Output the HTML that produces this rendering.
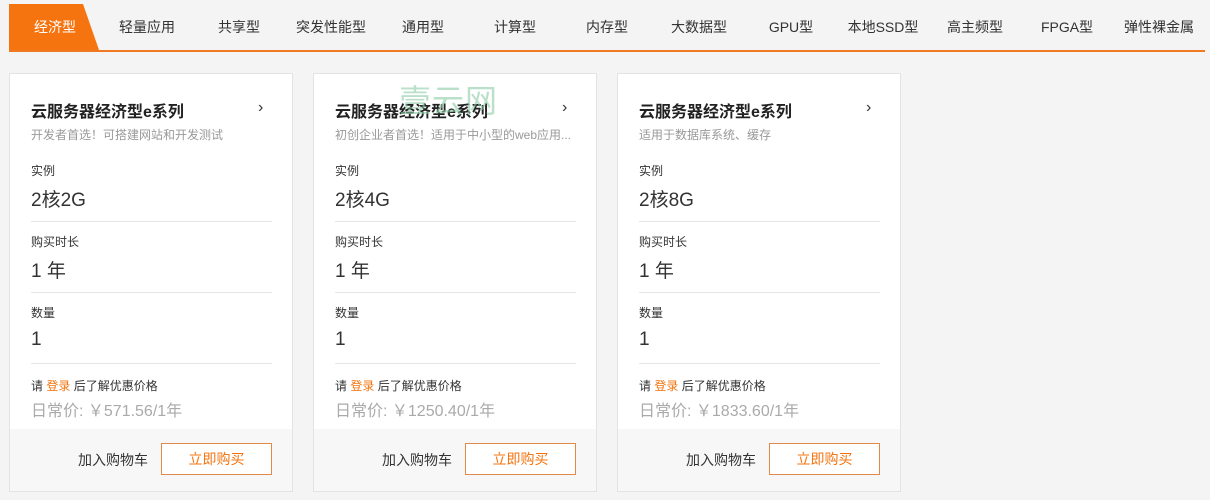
<!DOCTYPE html>
<html><head><meta charset="utf-8"><style>
*{margin:0;padding:0;box-sizing:border-box}
body{width:1210px;height:500px;background:#f4f4f4;font-family:"Liberation Sans","Noto Sans CJK SC",sans-serif;position:relative;overflow:hidden;color:#333}
.tabs{position:absolute;left:9px;top:4px;width:1196px;height:48px;border-bottom:2px solid #f07a24}
.act{position:absolute;left:0;top:0;width:90px;height:46px;background:#f5740f;clip-path:polygon(0 0,74px 0,90px 46px,0 46px)}
.tab{position:absolute;top:0;width:92px;height:46px;line-height:46px;text-align:center;font-size:14px;color:#333}
.card{position:absolute;top:73px;width:284px;height:419px;background:#fff;border:1px solid #e3e3e3}
.t{position:absolute;left:21px;top:24px;font-size:16px;font-weight:bold;color:#222}
.arr{position:absolute;left:248px;top:25px;font-size:16px;color:#333}
.s{position:absolute;left:21px;top:52px;font-size:12px;color:#999}
.lb{position:absolute;left:21px;font-size:12px;color:#333}
.v{position:absolute;left:21px;font-size:19px;color:#333}
.hr{position:absolute;left:21px;width:241px;height:1px;background:#e6e6e6}
.lg{position:absolute;left:21px;top:303px;font-size:12px;color:#333}
.lg b{font-weight:normal;color:#f5740f}
.pr{position:absolute;left:21px;top:323px;font-size:16px;color:#aaa}
.ft{position:absolute;left:0;bottom:0;width:282px;height:62px;background:#f7f7f7}
.cart{position:absolute;left:68px;top:21px;font-size:14px;color:#333}
.buy{position:absolute;left:151px;top:14px;width:111px;height:32px;border:1px solid #e08a4a;background:#fff;color:#f5740f;text-align:center;line-height:30px;font-size:14px}
.wm{position:absolute;left:399px;top:76px;font-size:32px;color:#8fcca8;opacity:.6;letter-spacing:1px}
</style></head><body>
<div class="tabs">
<div class="act"></div>
<div class="tab" style="left:0;width:92px;color:#fff">经济型</div>
<div class="tab" style="left:92px">轻量应用</div>
<div class="tab" style="left:184px">共享型</div>
<div class="tab" style="left:276px">突发性能型</div>
<div class="tab" style="left:368px">通用型</div>
<div class="tab" style="left:460px">计算型</div>
<div class="tab" style="left:552px">内存型</div>
<div class="tab" style="left:644px">大数据型</div>
<div class="tab" style="left:736px">GPU型</div>
<div class="tab" style="left:828px">本地SSD型</div>
<div class="tab" style="left:920px">高主频型</div>
<div class="tab" style="left:1012px">FPGA型</div>
<div class="tab" style="left:1104px">弹性裸金属</div>
</div>

<div class="card" style="left:9px">
<div class="t">云服务器经济型e系列</div><div class="arr">›</div>
<div class="s">开发者首选！可搭建网站和开发测试</div>
<div class="lb" style="top:88px">实例</div><div class="v" style="top:111px">2核2G</div><div class="hr" style="top:147px"></div>
<div class="lb" style="top:159px">购买时长</div><div class="v" style="top:182px">1 年</div><div class="hr" style="top:218px"></div>
<div class="lb" style="top:230px">数量</div><div class="v" style="top:255px">1</div><div class="hr" style="top:289px"></div>
<div class="lg">请 <b>登录</b> 后了解优惠价格</div>
<div class="pr">日常价: ￥571.56/1年</div>
<div class="ft"><div class="cart">加入购物车</div><div class="buy">立即购买</div></div>
</div>

<div class="card" style="left:313px">
<div class="t">云服务器经济型e系列</div><div class="arr">›</div>
<div class="s">初创企业者首选！适用于中小型的web应用...</div>
<div class="lb" style="top:88px">实例</div><div class="v" style="top:111px">2核4G</div><div class="hr" style="top:147px"></div>
<div class="lb" style="top:159px">购买时长</div><div class="v" style="top:182px">1 年</div><div class="hr" style="top:218px"></div>
<div class="lb" style="top:230px">数量</div><div class="v" style="top:255px">1</div><div class="hr" style="top:289px"></div>
<div class="lg">请 <b>登录</b> 后了解优惠价格</div>
<div class="pr">日常价: ￥1250.40/1年</div>
<div class="ft"><div class="cart">加入购物车</div><div class="buy">立即购买</div></div>
</div>

<div class="card" style="left:617px">
<div class="t">云服务器经济型e系列</div><div class="arr">›</div>
<div class="s">适用于数据库系统、缓存</div>
<div class="lb" style="top:88px">实例</div><div class="v" style="top:111px">2核8G</div><div class="hr" style="top:147px"></div>
<div class="lb" style="top:159px">购买时长</div><div class="v" style="top:182px">1 年</div><div class="hr" style="top:218px"></div>
<div class="lb" style="top:230px">数量</div><div class="v" style="top:255px">1</div><div class="hr" style="top:289px"></div>
<div class="lg">请 <b>登录</b> 后了解优惠价格</div>
<div class="pr">日常价: ￥1833.60/1年</div>
<div class="ft"><div class="cart">加入购物车</div><div class="buy">立即购买</div></div>
</div>
<div class="wm">壹云网</div>
</body></html>
